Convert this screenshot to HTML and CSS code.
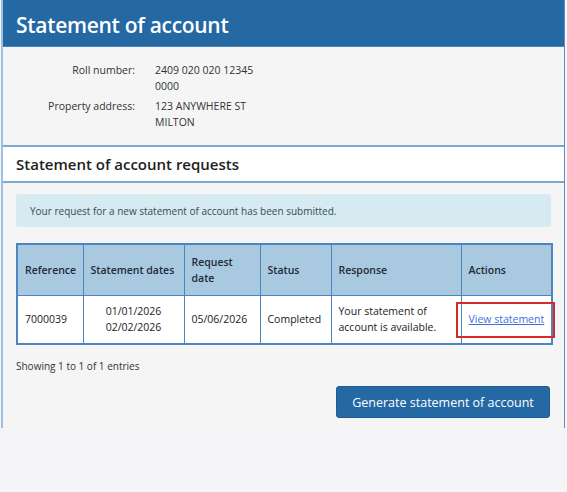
FILE: index.html
```html
<!DOCTYPE html>
<html lang="en">
<head>
<meta charset="utf-8">
<title>Statement of account</title>
<link rel="stylesheet" href="styles.css">
</head>
<body>
<div class="panel">
  <header class="panel-head">
    <h1 class="title">Statement of account</h1>
  </header>
  <section class="info">
    <div class="info-label">Roll number:</div>
    <div class="info-value">2409 020 020 12345<br>0000</div>
    <div class="info-label">Property address:</div>
    <div class="info-value">123 ANYWHERE ST<br>MILTON</div>
  </section>
  <div class="sub-head">
    <h2 class="sub-title">Statement of account requests</h2>
  </div>
  <section class="body">
    <div class="alert">Your request for a new statement of account has been submitted.</div>
    <table class="grid">
      <colgroup>
        <col class="w-ref">
        <col class="w-dates">
        <col class="w-req">
        <col class="w-status">
        <col class="w-resp">
        <col class="w-act">
      </colgroup>
      <thead>
        <tr>
          <th>Reference</th>
          <th>Statement dates</th>
          <th>Request<br>date</th>
          <th>Status</th>
          <th>Response</th>
          <th>Actions</th>
        </tr>
      </thead>
      <tbody>
        <tr>
          <td>7000039</td>
          <td class="center">01/01/2026<br>02/02/2026</td>
          <td>05/06/2026</td>
          <td>Completed</td>
          <td>Your statement of<br>account is available.</td>
          <td class="act-cell"><a href="#" class="link">View statement</a><span class="highlight"></span></td>
        </tr>
      </tbody>
    </table>
    <div class="entries">Showing 1 to 1 of 1 entries</div>
    <div class="actions">
      <button class="btn" type="button">Generate statement of account</button>
    </div>
  </section>
</div>
</body>
</html>
```
FILE: styles.css
```css
* { box-sizing: border-box; }
html, body { margin: 0; padding: 0; }
body {
  background: #f5f5f7;
  font-family: "Open Sans", "Noto Sans", sans-serif;
  color: #222;
  width: 567px;
  height: 492px;
  overflow: hidden;
}
.panel {
  margin: 0 2px 0 1px;
  border-left: 2px solid #9cc0df;
  border-right: 1px solid #5b91c6;
  background: #f5f5f5;
}
.panel-head {
  background: #2468a4;
  height: 47px;
  display: flex;
  align-items: center;
  padding-left: 13px;
  padding-top: 3px;
  border-bottom: 1px solid #4a84bd;
}
.title {
  margin: 0;
  color: #fff;
  font-size: 21px;
  font-weight: 600;
  letter-spacing: -0.3px;
}
.info {
  display: grid;
  grid-template-columns: 132px 1fr;
  column-gap: 20px;
  row-gap: 4px;
  padding: 15px 0 15px 0;
  font-size: 10.5px;
  line-height: 16px;
  color: #333;
  height: 98px;
}
.info-label { text-align: right; }
.sub-head {
  background: #fff;
  border-top: 2px solid #7aa8d4;
  border-bottom: 2px solid #7aa8d4;
  height: 38px;
  display: flex;
  align-items: center;
  padding-left: 13px;
}
.sub-title {
  margin: 0;
  font-size: 15px;
  font-weight: 600;
  color: #1e1e1e;
}
.body {
  padding: 11px 13px 10px 13px;
}
.alert {
  background: #d5eaf1;
  border-radius: 3px;
  height: 33px;
  display: flex;
  align-items: center;
  padding-left: 14px;
  font-size: 10px;
  color: #3a4a55;
}
.grid {
  margin-top: 16px;
  width: 535px;
  table-layout: fixed;
  border-collapse: collapse;
  font-size: 10.5px;
  color: #222;
  border: 2px solid #4d86bf;
}
.w-ref { width: 66px; }
.w-dates { width: 101px; }
.w-req { width: 76px; }
.w-status { width: 71px; }
.w-resp { width: 130px; }
.w-act { width: 91px; }
.grid th, .grid td {
  border: 1px solid #4d86bf;
  text-align: left;
  padding: 0 7px;
  line-height: 16px;
  white-space: nowrap;
}
.grid th {
  background: #a9c9e1;
  font-weight: 600;
  height: 51px;
  color: #1e2a36;
}
.grid td {
  background: #fff;
  height: 49px;
}
.grid td.center { text-align: center; }
.act-cell { position: relative; }
.link {
  color: #3d6fe0;
  text-decoration: underline;
}
.highlight {
  position: absolute;
  left: -6px;
  right: -4px;
  top: 6px;
  bottom: 5px;
  border: 2px solid #d62a2a;
  pointer-events: none;
}
.entries {
  margin-top: 14px;
  font-size: 10px;
  color: #333;
}
.actions {
  display: flex;
  justify-content: flex-end;
  padding-right: 1px;
  margin-top: 13px;
}
.btn {
  background: #2468a4;
  color: #fff;
  border: 1px solid #1f5c93;
  border-radius: 3px;
  font-family: inherit;
  font-size: 12.5px;
  width: 214px;
  height: 32px;
  padding: 0;
  cursor: pointer;
}
```
